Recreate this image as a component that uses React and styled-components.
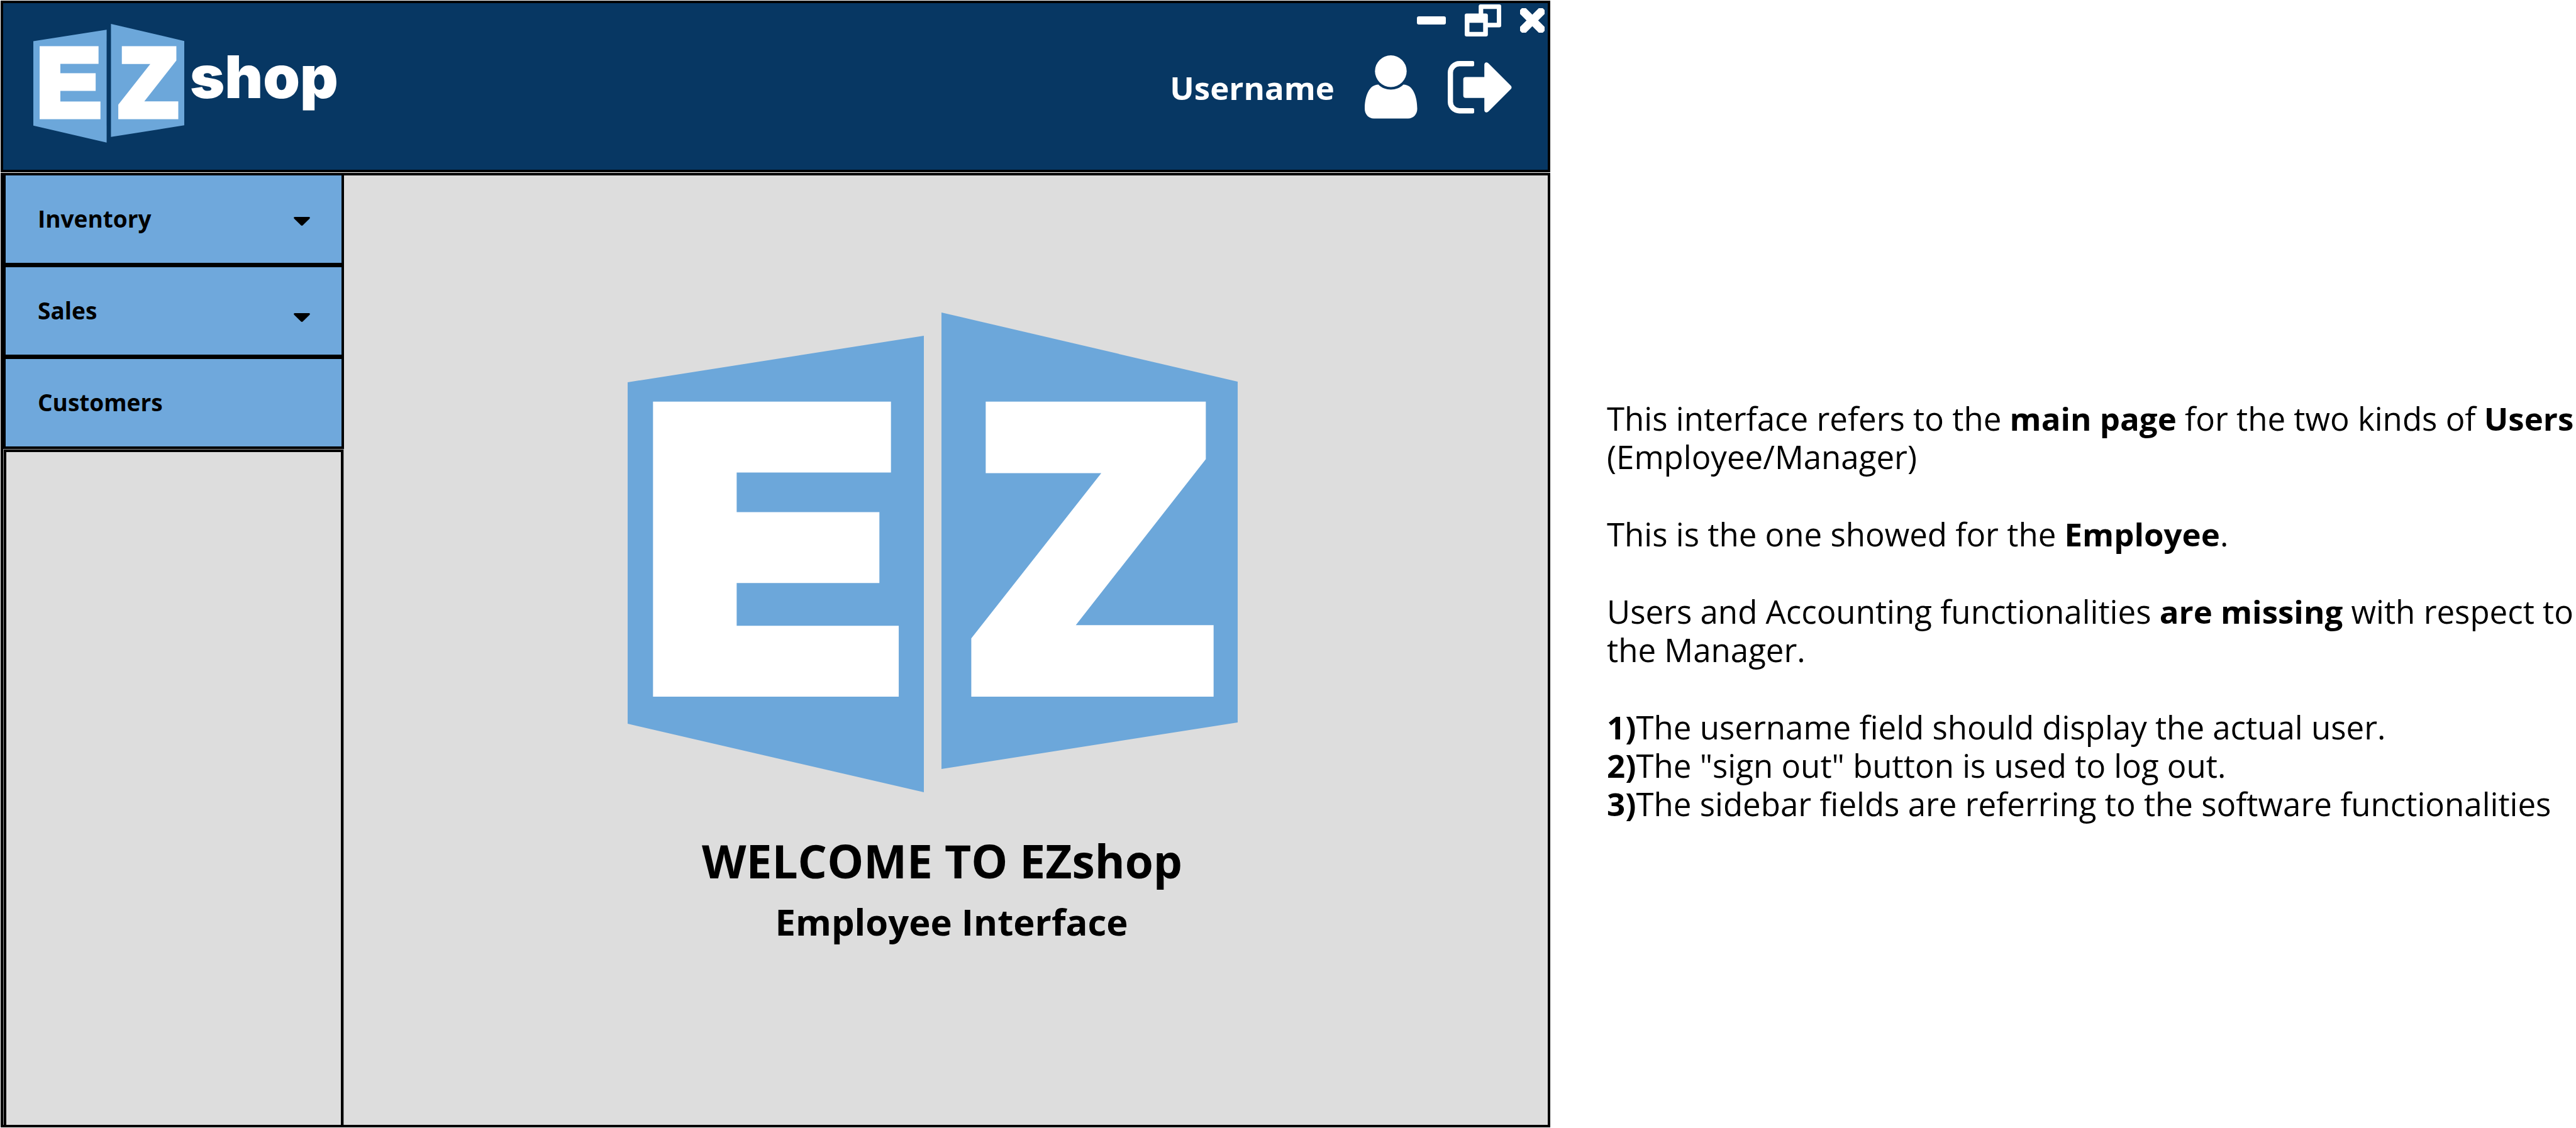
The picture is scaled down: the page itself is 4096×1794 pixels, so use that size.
import React from 'react';
import styled, { createGlobalStyle } from 'styled-components';

const color = {
  navy: '#073763',
  blue: '#6fa8dc',
  logo: '#6ca7da',
  panel: '#dddddd',
  seam: '#999999',
  ink: '#000000',
  paper: '#ffffff',
};

const GlobalStyle = createGlobalStyle`
  *, *::before, *::after { box-sizing: border-box; }
  body { margin: 0; background: ${color.paper}; color: ${color.ink}; font-family: "Open Sans", "Noto Sans", sans-serif; }
  h1, h2, p { margin: 0; }
  button { margin: 0; padding: 0; border: 0; background: none; color: inherit; font: inherit; cursor: pointer; }
  svg { display: block; }
`;

const Page = styled.div`
  display: grid;
  grid-template-columns: minmax(0, 2465fr) minmax(0, 1631fr);
  min-height: 100vh;
`;

const AppWindow = styled.section`
  display: flex;
  flex-direction: column;
  gap: 1px;
  padding: 1px 0 1px 1px;
`;

const Header = styled.header`
  display: flex;
  justify-content: space-between;
  align-items: flex-start;
  border: 4px solid ${color.ink};
  background: ${color.navy};
  color: ${color.paper};
`;

const Brand = styled.div`
  display: flex;
  align-items: center;
  gap: 9px;
  padding: 33px 48px 43px;
`;

const Wordmark = styled.span`
  padding-bottom: 20px;
  font: 900 94px/94px Inter, "Open Sans", sans-serif;
`;

const HeaderTools = styled.div`
  display: flex;
  flex-direction: column;
  align-items: flex-end;
  gap: 30px;
  padding: 2px 5px 0 0;
`;

const WindowControls = styled.div`
  display: flex;
  align-items: center;
  gap: 30px;
`;

const Account = styled.div`
  display: flex;
  align-items: center;
  gap: 48px;
  padding-right: 52px;
`;

const Username = styled.span`
  font-size: 51px;
  line-height: 68px;
  font-weight: 700;
`;

const Body = styled.div`
  display: flex;
  flex: 1;
  border: 4px solid ${color.ink};
  background: ${color.panel};
`;

const Sidebar = styled.nav`
  display: flex;
  flex-direction: column;
  flex: 0 0 542px;
  background: ${color.seam};
`;

const MenuButton = styled.button`
  display: flex;
  justify-content: space-between;
  align-items: center;
  height: ${p => (p.$last ? 143 : 146)}px;
  border: solid ${color.ink};
  border-width: 0 4px ${p => (p.$last ? 4 : 7)}px;
  padding: 0 50px 0 51px;
  background: ${color.blue};
  color: ${color.ink};
  font-size: 37px;
  line-height: 50px;
  font-weight: 700;
`;

const Caret = styled.svg`
  width: 26px;
  height: 14px;
  margin-top: ${p => p.$drop}px;
`;

const SidebarRest = styled.div`
  flex: 1;
  margin: 1px 1px 0;
  border: solid ${color.ink};
  border-width: 4px 4px 0;
  background: ${color.panel};
`;

const Welcome = styled.main`
  display: flex;
  flex: 1;
  flex-direction: column;
  align-items: center;
  padding-top: 218px;
`;

const Hero = styled.div`
  padding: 0 42px 54px 0;
`;

const Title = styled.h1`
  padding-right: 12px;
  font-size: 73px;
  line-height: 110px;
  font-weight: 700;
`;

const Subtitle = styled.h2`
  padding-left: 18px;
  font-size: 58px;
  line-height: 84px;
  font-weight: 700;
`;

const Notes = styled.aside`
  display: flex;
  flex-direction: column;
  gap: 62px;
  padding: 635px 0 0 90px;
  font-size: 51px;
  line-height: 61px;
`;

const NoteLine = styled.span`
  display: block;
`;

const LogoLetter = styled.text`
  font: 700 618px "Liberation Sans", sans-serif;
  fill: ${color.paper};
  stroke: ${color.paper};
  stroke-width: 44px;
  stroke-linejoin: miter;
`;

const Logo = ({ width }) => (
  <svg width={width} viewBox="0 0 970 763" role="img" aria-label="EZ">
    <path fill={color.logo} d="M0 111 471 37V763L0 654Z" />
    <path fill={color.logo} d="M499 0 970 110V652L499 726Z" />
    <LogoLetter x="21" y="589">E</LogoLetter>
    <LogoLetter x="550" y="589">Z</LogoLetter>
  </svg>
);

const MinimizeIcon = () => (
  <svg width="46" height="13" viewBox="0 0 46 13" fill="currentColor"><rect width="46" height="13" rx="3" /></svg>
);

const RestoreIcon = () => (
  <svg width="58" height="51" viewBox="0 0 58 51" fill="currentColor" fillRule="evenodd">
    <path d="M25.5 0H55a3 3 0 0 1 3 3V33.5a3 3 0 0 1-3 3H36.8V48a3 3 0 0 1-3 3H3a3 3 0 0 1-3-3V17.6a3 3 0 0 1 3-3H22.2V3.3a3 3 0 0 1 3.3-3.3ZM29.4 7.3V14.6H33.8a3 3 0 0 1 3 3V29.2H51V7.3ZM7.5 29.2V43.7H29.3V29.2Z" />
  </svg>
);

const CloseIcon = () => (
  <svg width="39" height="39" viewBox="0 0 39 39" fill="currentColor">
    <rect x="-6" y="13" width="51" height="13" rx="3" transform="rotate(45 19.5 19.5)" />
    <rect x="-6" y="13" width="51" height="13" rx="3" transform="rotate(-45 19.5 19.5)" />
  </svg>
);

const UserIcon = () => (
  <svg width="84" height="101" viewBox="0 0 84 101" fill="currentColor">
    <circle cx="41.5" cy="25.2" r="25.2" />
    <path d="M21.8 46.5C27 52 34 54.4 41.6 54.4S56 52 61.4 46.5C77 46.5 83.5 66 83.5 85C83.5 94 77 100.5 69 100.5H14.5C6.5 100.5 0 94 0 85C0 66 6.5 46.5 21.8 46.5Z" />
  </svg>
);

const SignOutIcon = () => (
  <svg width="102" height="84" viewBox="0 0 102 84" fill="currentColor">
    <path d="M18.5 0H40a2 2 0 0 1 2 2V6.5a2 2 0 0 1-2 2H18.5A10 10 0 0 0 8.4 18.5V65A10 10 0 0 0 18.5 75H40a2 2 0 0 1 2 2V81.5a2 2 0 0 1-2 2H18.5A18.5 18.5 0 0 1 0 65V18.5A18.5 18.5 0 0 1 18.5 0Z" />
    <path d="M28.5 25.5H58.2V6C58.2 2 62 1 65 4L100.5 39.5Q102.5 42 100.5 44.5L65 80C62 83 58.2 82 58.2 78V58.7H28.5Q24.7 58.7 24.7 55V29Q24.7 25.5 28.5 25.5Z" />
  </svg>
);

const CaretIcon = ({ drop }) => (
  <Caret $drop={drop} viewBox="0 0 26 14" aria-hidden="true">
    <path d="M1.5 0H24.5Q27 0.8 25 3L14.5 13.3Q13 14.5 11.5 13.3L1 3Q-1 0.8 1.5 0Z" />
  </Caret>
);

const menu = [
  { label: 'Inventory', drop: 8 },
  { label: 'Sales', drop: 22 },
  { label: 'Customers' },
];

export default function App() {
  return (
    <>
      <GlobalStyle />
      <Page>
        <AppWindow>
          <Header>
            <Brand>
              <Logo width={240} />
              <Wordmark>shop</Wordmark>
            </Brand>
            <HeaderTools>
              <WindowControls>
                <button aria-label="Minimize"><MinimizeIcon /></button>
                <button aria-label="Restore"><RestoreIcon /></button>
                <button aria-label="Close"><CloseIcon /></button>
              </WindowControls>
              <Account>
                <Username>Username</Username>
                <UserIcon />
                <button aria-label="Sign out"><SignOutIcon /></button>
              </Account>
            </HeaderTools>
          </Header>
          <Body>
            <Sidebar>
              {menu.map((item, i) => (
                <MenuButton key={item.label} $last={i === menu.length - 1}>
                  {item.label}
                  {item.drop && <CaretIcon drop={item.drop} />}
                </MenuButton>
              ))}
              <SidebarRest />
            </Sidebar>
            <Welcome>
              <Hero><Logo width={970} /></Hero>
              <Title>WELCOME TO EZshop</Title>
              <Subtitle>Employee Interface</Subtitle>
            </Welcome>
          </Body>
        </AppWindow>
        <Notes>
          <p>This interface refers to the <b>main page</b> for the two kinds of <b>Users</b> (Employee/Manager)</p>
          <p>This is the one showed for the <b>Employee</b>.</p>
          <p>Users and Accounting functionalities <b>are missing</b> with respect to the Manager.</p>
          <p>
            <NoteLine><b>1)</b>The username field should display the actual user.</NoteLine>
            <NoteLine><b>2)</b>The "sign out" button is used to log out.</NoteLine>
            <NoteLine><b>3)</b>The sidebar fields are referring to the software functionalities</NoteLine>
          </p>
        </Notes>
      </Page>
    </>
  );
}
